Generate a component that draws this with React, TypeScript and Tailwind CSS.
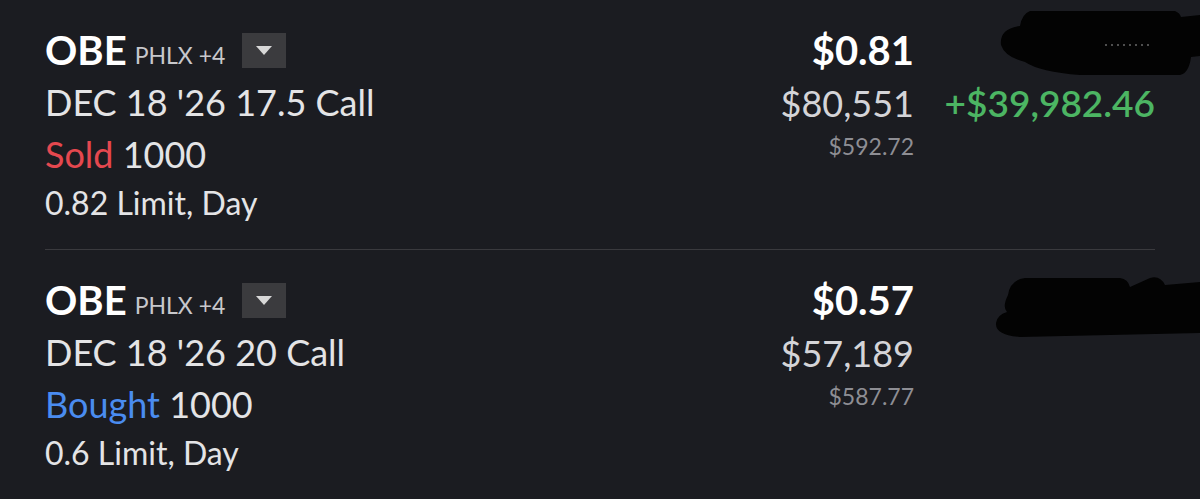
const orders = [
  {
    sym: "OBE",
    exch: "PHLX +4",
    contract: "DEC 18 '26 17.5 Call",
    side: "Sold",
    qty: "1000",
    terms: "0.82 Limit, Day",
    price: "$0.81",
    value: "$80,551",
    sub: "$592.72",
    pnl: "+$39,982.46",
  },
  {
    sym: "OBE",
    exch: "PHLX +4",
    contract: "DEC 18 '26 20 Call",
    side: "Bought",
    qty: "1000",
    terms: "0.6 Limit, Day",
    price: "$0.57",
    value: "$57,189",
    sub: "$587.77",
    pnl: "",
  },
];

// redaction marks drawn over the account column
const Scribble1 = () => (
  <svg className="absolute left-[980px] top-[0px]" width="220" height="80" viewBox="0 0 220 80">
    <path
      d="M50 11 L195 11 Q200 13 201 17 L220 15 L220 56 L211 57 Q209 73 200 75 L100 75 Q60 72 45 62 Q25 57 21 45 Q19 29 40 26 Q42 14 50 11 Z"
      fill="#030303"
    />
    <path d="M125 45 L170 45" stroke="#9a9a9a" strokeWidth="1" strokeDasharray="2 4" />
  </svg>
);

const Scribble2 = () => (
  <svg className="absolute left-[980px] top-[265px]" width="220" height="80" viewBox="0 0 220 80">
    <path
      d="M45 13 L140 13 Q148 14 150 22 L170 13 Q180 10 185 20 L220 17 L220 68 L40 72 Q15 70 16 58 Q17 50 27 47 Q22 42 28 30 Q30 15 45 13 Z"
      fill="#030303"
    />
  </svg>
);

const Row = ({ o, last }: { o: (typeof orders)[number]; last?: boolean }) => (
  <div className={`flex h-[250px] pt-[22px] ${last ? "" : "border-b border-[#3a3a3e]"}`}>
    <div className="flex flex-1 flex-col">
      <div className="flex h-[56px] items-center">
        <span className="text-[40px] font-bold leading-none text-white">{o.sym}</span>
        <span className="ml-[8px] mt-[10px] text-[23px] leading-none text-[#c8c8cc]">{o.exch}</span>
        <span className="ml-[17px] flex h-[35px] w-[44px] items-center justify-center bg-[#3b3b3e]">
          <span className="h-0 w-0 border-x-[8px] border-t-[9px] border-x-transparent border-t-[#d8d8d8]" />
        </span>
      </div>
      <div className="mt-[-2px] h-[52px] text-[36px] leading-[52px] text-[#e4e4e6]">{o.contract}</div>
      <div className="h-[52px] text-[36px] leading-[52px] text-[#e4e4e6]">
        <span className={o.side === "Sold" ? "text-[#e5484f]" : "text-[#4a8cf0]"}>{o.side}</span> {o.qty}
      </div>
      <div className="h-[48px] text-[32px] leading-[46px] text-[#e4e4e6]">{o.terms}</div>
    </div>
    <div className="flex w-[241px] flex-col items-end">
      <div className="h-[56px] text-[40px] font-bold leading-[56px] text-white">{o.price}</div>
      <div className="h-[50px] text-[36px] leading-[50px] text-[#d4d4d8]">{o.value}</div>
      <div className="mt-[3px] text-[23px] leading-[30px] text-[#8e8e94]">{o.sub}</div>
    </div>
    <div className="flex w-[241px] flex-col items-end">
      <div className="h-[56px]" />
      <div className="h-[50px] text-[37px] font-semibold leading-[50px] text-[#4cb563]">{o.pnl}</div>
    </div>
  </div>
);

export default function App() {
  return (
    <div
      className="relative h-[499px] w-[1200px] overflow-hidden bg-[#1b1c21] pl-[45px] pr-[45px]"
      style={{ fontFamily: "'Source Sans Pro', Lato, sans-serif" }}
    >
      {orders.map((o, i) => (
        <Row key={i} o={o} last={i === orders.length - 1} />
      ))}
      <Scribble1 />
      <Scribble2 />
    </div>
  );
}
